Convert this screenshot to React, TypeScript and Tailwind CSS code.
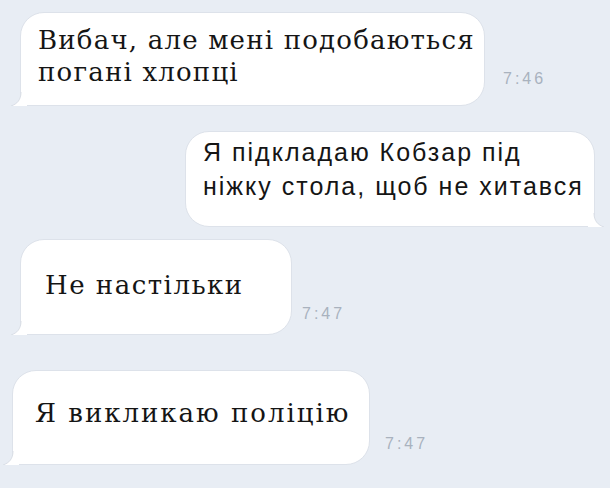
import React from "react";

const serif = { fontFamily: '"DejaVu Serif", "Liberation Serif", serif' };

function Tail({ side }: { side: "left" | "right" }) {
  if (side === "left") {
    return (
      <svg
        className="absolute -left-[10px] bottom-[-1px]"
        width="16"
        height="14"
        viewBox="0 0 16 14"
      >
        <path d="M16 0 L16 14 L0 14 C6 12 10 8 10 0 Z" fill="#fff" />
        <path d="M0 14 C6 12 10 8 10 0" fill="none" stroke="#d9dee6" strokeWidth="1" />
      </svg>
    );
  }
  return (
    <svg
      className="absolute -right-[10px] bottom-[-1px]"
      width="16"
      height="14"
      viewBox="0 0 16 14"
    >
      <path d="M0 0 L0 14 L16 14 C10 12 6 8 6 0 Z" fill="#fff" />
      <path d="M16 14 C10 12 6 8 6 0" fill="none" stroke="#d9dee6" strokeWidth="1" />
    </svg>
  );
}

function Incoming({
  lines,
  time,
  className,
  bubble,
  text,
  timeClass,
}: {
  lines: string[];
  time: string;
  className: string;
  bubble: string;
  text: string;
  timeClass: string;
}) {
  return (
    <div className={`flex items-end ${className}`}>
      <div
        className={`relative bg-white border border-[#dde2ea] rounded-[24px] rounded-bl-none ${bubble}`}
      >
        <div
          className={`text-[26px] leading-[32px] text-[#151515] whitespace-nowrap ${text}`}
          style={serif}
        >
          {lines.map((l) => (
            <div key={l}>{l}</div>
          ))}
        </div>
        <Tail side="left" />
      </div>
      <div
        className={`text-[16px] leading-none tracking-[3px] text-[#a9b2be] font-['Liberation_Sans',sans-serif] ${timeClass}`}
      >
        {time}
      </div>
    </div>
  );
}

export default function App() {
  return (
    <div className="w-[610px] h-[488px] bg-[#e8edf4] overflow-hidden">
      <div className="flex flex-col">
        <Incoming
          className="mt-[12px] ml-[20px]"
          bubble="w-[465px] h-[94px] pl-[17px] pt-[11px]"
          text="tracking-[1.2px]"
          lines={["Вибач, але мені подобаються", "погані хлопці"]}
          time="7:46"
          timeClass="ml-[18px] mb-[19px]"
        />
        <div className="flex justify-end mt-[25px] mr-[15px]">
          <div className="relative bg-white border border-[#dde2ea] rounded-[24px] rounded-br-none w-[410px] h-[96px] pl-[17px] pt-[3px]">
            <div className="text-[25px] leading-[34px] tracking-[2px] text-[#151515] whitespace-nowrap font-['Liberation_Sans',sans-serif]">
              <div>Я підкладаю Кобзар під</div>
              <div>ніжку стола, щоб не хитався</div>
            </div>
            <Tail side="right" />
          </div>
        </div>
        <Incoming
          className="mt-[12px] ml-[20px]"
          bubble="w-[272px] h-[96px] pl-[24px] pt-[29px]"
          text="tracking-[1.5px]"
          lines={["Не настільки"]}
          time="7:47"
          timeClass="ml-[10px] mb-[13px]"
        />
        <Incoming
          className="mt-[35px] ml-[12px]"
          bubble="w-[358px] h-[95px] pl-[22px] pt-[26px]"
          text="tracking-[2px]"
          lines={["Я викликаю поліцію"]}
          time="7:47"
          timeClass="ml-[15px] mb-[13px]"
        />
      </div>
    </div>
  );
}
